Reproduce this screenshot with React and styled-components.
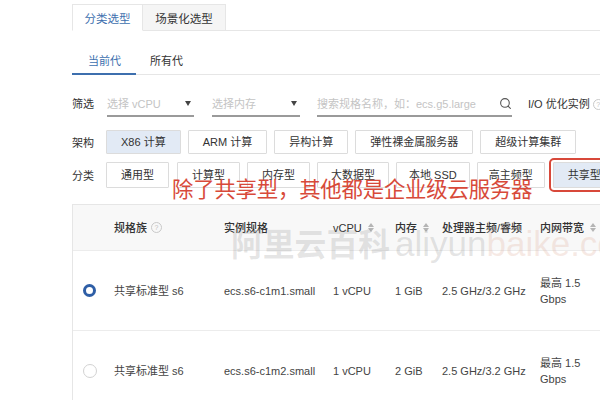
import React from 'react'
import styled, { createGlobalStyle } from 'styled-components'
import { Search } from 'lucide-react'

const GlobalStyle = createGlobalStyle`
  html, body {
    margin: 0;
    padding: 0;
    background: #fff;
  }
  body {
    font-family: "Helvetica Neue", "Liberation Sans", "Noto Sans CJK SC", sans-serif;
    font-size: 11px;
    color: #333;
  }
`

const Page = styled.div`
  position: relative;
  width: 600px;
  height: 400px;
  overflow: hidden;
  padding: 4px 0 0 72px;
  box-sizing: border-box;
`

const TopTabs = styled.div`
  display: flex;
  height: 26px;
  width: 560px;
  border-bottom: 1px solid #e6e6e6;
`
const TopTab = styled.div`
  display: flex;
  align-items: center;
  justify-content: center;
  width: ${p => p.w}px;
  box-sizing: border-box;
  height: 27px;
  font-size: 11.5px;
  border: 1px solid #e6e6e6;
  border-left-width: ${p => (p.active ? 1 : 0)}px;
  border-bottom-color: ${p => (p.active ? '#fff' : '#e6e6e6')};
  background: ${p => (p.active ? '#fff' : '#f5f5f5')};
  color: ${p => (p.active ? '#3d6fae' : '#333')};
`

const SubTabs = styled.div`
  display: flex;
  margin-top: 18px;
  width: 560px;
  border-bottom: 1px solid #e6e6e6;
`
const SubTab = styled.div`
  height: 24px;
  line-height: 24px;
  padding: 0 15px 0 ${p => p.pl}px;
  font-size: 11px;
  margin-bottom: -1px;
  color: ${p => (p.active ? '#3d6fae' : '#333')};
  border-bottom: 2px solid ${p => (p.active ? '#3d6fae' : 'transparent')};
`

const FilterRow = styled.div`
  display: flex;
  align-items: flex-end;
  height: 26px;
  margin-top: 16px;
`
const RowLabel = styled.div`
  width: 34px;
  flex: none;
  font-size: 11px;
  color: #333;
  align-self: center;
`
const FilterLabel = styled(RowLabel)`
  width: 35px;
  align-self: flex-end;
  line-height: 26px;
`
const Select = styled.div`
  display: flex;
  align-items: center;
  justify-content: space-between;
  width: ${p => p.w}px;
  height: 24px;
  margin-right: ${p => p.mr}px;
  border-bottom: 2px solid #9a9a9a;
  color: #c4c4c4;
  font-size: 11px;
  flex: none;
`
const Caret = styled.span`
  width: 0;
  height: 0;
  margin-right: 3px;
  border-left: 3.5px solid transparent;
  border-right: 3.5px solid transparent;
  border-top: 5px solid #444;
`
const IOLabel = styled.div`
  display: flex;
  align-items: center;
  gap: 3px;
  line-height: 26px;
  margin-left: 16px;
  white-space: nowrap;
  color: #333;
  font-size: 11px;
`
const Help = styled.span`
  display: inline-flex;
  align-items: center;
  justify-content: center;
  width: 9px;
  height: 9px;
  border: 1px solid #c9c9c9;
  border-radius: 50%;
  color: #c0c0c0;
  font-size: 7px;
  line-height: 1;
`

const OptionRow = styled.div`
  display: flex;
  align-items: center;
  margin-top: ${p => p.mt}px;
  gap: 7px;
  white-space: nowrap;
`
const Option = styled.div`
  flex: none;
  height: ${p => p.h}px;
  line-height: ${p => p.h}px;
  padding: 0 ${p => p.px || 14}px;
  border: 1px solid #dcdcdc;
  background: ${p => (p.active ? '#e2eaf5' : '#fff')};
  color: #333;
  font-size: 11px;
  margin-left: ${p => p.ml || 0}px;
  border-radius: 1px;
  outline: ${p => (p.marked ? '2px solid #d8483a' : 'none')};
  outline-offset: 2px;
`
const RowLabelSpacer = styled(RowLabel)`
  margin-right: -7px;
`

const Table = styled.div`
  margin-top: 16px;
  width: 560px;
  border-left: 1px solid #e6e6e6;
  border-top: 1px solid #e6e6e6;
`
const TRow = styled.div`
  display: grid;
  grid-template-columns: 41px 110px 109px 62px 47px 98px 1fr;
  align-items: center;
  height: ${p => p.h}px;
  background: ${p => (p.head ? '#f8f8f8' : '#fff')};
  border-bottom: 1px solid #ececec;
  font-weight: ${p => (p.head ? 500 : 400)};
  color: ${p => (p.head ? '#333' : '#444')};
  font-size: 11px;
  white-space: nowrap;
`
const Cell = styled.div`
  display: flex;
  align-items: center;
  gap: 4px;
  line-height: 16px;
`
const Radio = styled.span`
  margin-left: 10px;
  width: ${p => (p.checked ? 7 : 12)}px;
  height: ${p => (p.checked ? 7 : 12)}px;
  border-radius: 50%;
  border: ${p => (p.checked ? '3.5px solid #2e5ea6' : '1px solid #d2d2d2')};
  background: #fff;
`
const SortIcon = styled.span`
  display: inline-flex;
  flex-direction: column;
  gap: 1px;
  margin-left: 2px;
  &::before, &::after {
    content: '';
    width: 0;
    height: 0;
    border-left: 3.5px solid transparent;
    border-right: 3.5px solid transparent;
  }
  &::before { border-bottom: 4px solid #b5b5b5; }
  &::after { border-top: 4px solid #b5b5b5; }
`

const Annotation = styled.div`
  position: absolute;
  left: 172px;
  top: 175px;
  font-family: "Noto Sans CJK SC", sans-serif;
  font-size: 21.4px;
  line-height: 26px;
  color: #d84a3a;
  white-space: nowrap;
  letter-spacing: -0.2px;
`
const Watermark = styled.div`
  position: absolute;
  left: 231px;
  top: 219px;
  white-space: nowrap;
  pointer-events: none;
  display: flex;
  align-items: baseline;
  gap: 5px;
`
const WmCn = styled.span`
  font-family: "Noto Sans CJK SC", sans-serif;
  font-weight: 700;
  font-size: 31.8px;
  color: rgba(120, 120, 120, 0.2);
`
const WmEn = styled.span`
  font-family: "Liberation Sans", sans-serif;
  font-size: 35px;
  color: ${p => p.c};
`

const rows = [
  { checked: true, family: '共享标准型 s6', spec: 'ecs.s6-c1m1.small', cpu: '1 vCPU', mem: '1 GiB' },
  { checked: false, family: '共享标准型 s6', spec: 'ecs.s6-c1m2.small', cpu: '1 vCPU', mem: '2 GiB' },
]

export default function App() {
  return (
    <>
      <GlobalStyle />
      <Page>
        <TopTabs>
          <TopTab active w={71}>分类选型</TopTab>
          <TopTab w={83}>场景化选型</TopTab>
        </TopTabs>

        <SubTabs>
          <SubTab active pl={16}>当前代</SubTab>
          <SubTab pl={14}>所有代</SubTab>
        </SubTabs>

        <FilterRow>
          <FilterLabel>筛选</FilterLabel>
          <Select w={87} mr={18}>选择 vCPU<Caret /></Select>
          <Select w={88} mr={17}>选择内存<Caret /></Select>
          <Select w={195} mr={0}>
            搜索规格名称，如：ecs.g5.large
            <Search size={13} color="#555" strokeWidth={2} />
          </Select>
          <IOLabel>I/O 优化实例 <Help>?</Help></IOLabel>
        </FilterRow>

        <OptionRow mt={13}>
          <RowLabelSpacer>架构</RowLabelSpacer>
          <Option h={22} active>X86 计算</Option>
          <Option h={22}>ARM 计算</Option>
          <Option h={22}>异构计算</Option>
          <Option h={22}>弹性裸金属服务器</Option>
          <Option h={22}>超级计算集群</Option>
        </OptionRow>

        <OptionRow mt={8}>
          <RowLabelSpacer>分类</RowLabelSpacer>
          <Option h={24}>通用型</Option>
          <Option h={24} ml={1}>计算型</Option>
          <Option h={24}>内存型</Option>
          <Option h={24} px={13}>大数据型</Option>
          <Option h={24} px={12}>本地 SSD</Option>
          <Option h={24} px={11}>高主频型</Option>
          <Option h={24} ml={1} active marked>共享型</Option>
        </OptionRow>

        <Table>
          <TRow head h={45}>
            <Cell />
            <Cell>规格族 <Help>?</Help></Cell>
            <Cell>实例规格</Cell>
            <Cell>vCPU<SortIcon /></Cell>
            <Cell>内存<SortIcon /></Cell>
            <Cell>处理器主频/睿频</Cell>
            <Cell>内网带宽<SortIcon /></Cell>
          </TRow>
          {rows.map((r, i) => (
            <TRow key={i} h={79}>
              <Cell><Radio checked={r.checked} /></Cell>
              <Cell>{r.family}</Cell>
              <Cell>{r.spec}</Cell>
              <Cell>{r.cpu}</Cell>
              <Cell>{r.mem}</Cell>
              <Cell>2.5 GHz/3.2 GHz</Cell>
              <Cell>最高 1.5<br />Gbps</Cell>
            </TRow>
          ))}
        </Table>

        <Annotation>除了共享型，其他都是企业级云服务器</Annotation>
        <Watermark>
          <WmCn>阿里云百科</WmCn>
          <WmEn c="rgba(120,120,120,0.2)">aliyun<WmEn as="span" c="rgba(220,170,150,0.25)">baike.com</WmEn></WmEn>
        </Watermark>
      </Page>
    </>
  )
}
